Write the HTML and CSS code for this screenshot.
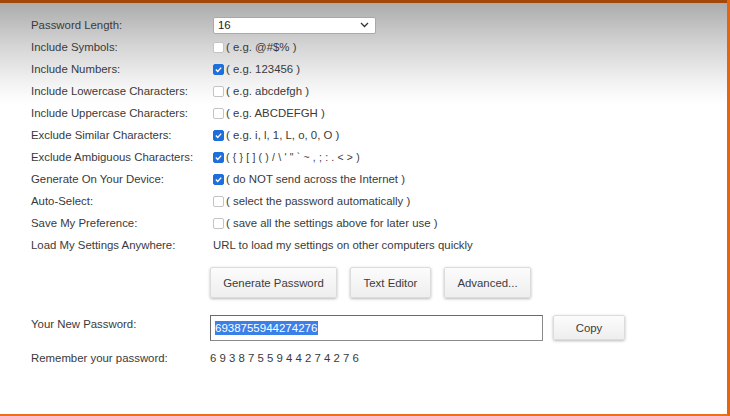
FILE: index.html
```html
<!DOCTYPE html>
<html>
<head>
<meta charset="utf-8">
<link rel="stylesheet" href="styles.css">
</head>
<body>
<div class="frame">
  <div class="topbar"></div>
  <div class="panel">
    <div class="form">
      <div class="label">Password Length:</div>
      <div class="value"><div class="select"><span>16</span><svg width="9" height="6" viewBox="0 0 9 6"><path d="M1 1l3.5 3.5L8 1" fill="none" stroke="#333" stroke-width="1.3"/></svg></div></div>

      <div class="label">Include Symbols:</div>
      <div class="value"><span class="cb"></span>( e.g. @#$% )</div>

      <div class="label">Include Numbers:</div>
      <div class="value"><span class="cb on"><svg viewBox="0 0 11 11"><path d="M2.3 5.6l2.2 2.2 4.3-4.6" fill="none" stroke="#fff" stroke-width="1.7"/></svg></span>( e.g. 123456 )</div>

      <div class="label">Include Lowercase Characters:</div>
      <div class="value"><span class="cb"></span>( e.g. abcdefgh )</div>

      <div class="label">Include Uppercase Characters:</div>
      <div class="value"><span class="cb"></span>( e.g. ABCDEFGH )</div>

      <div class="label">Exclude Similar Characters:</div>
      <div class="value"><span class="cb on"><svg viewBox="0 0 11 11"><path d="M2.3 5.6l2.2 2.2 4.3-4.6" fill="none" stroke="#fff" stroke-width="1.7"/></svg></span>( e.g. i, l, 1, L, o, 0, O )</div>

      <div class="label">Exclude Ambiguous Characters:</div>
      <div class="value"><span class="cb on"><svg viewBox="0 0 11 11"><path d="M2.3 5.6l2.2 2.2 4.3-4.6" fill="none" stroke="#fff" stroke-width="1.7"/></svg></span><span class="amb">( { } [ ] ( ) / \ ' " ` ~ , ; : . &lt; &gt; )</span></div>

      <div class="label">Generate On Your Device:</div>
      <div class="value"><span class="cb on"><svg viewBox="0 0 11 11"><path d="M2.3 5.6l2.2 2.2 4.3-4.6" fill="none" stroke="#fff" stroke-width="1.7"/></svg></span>( do NOT send across the Internet )</div>

      <div class="label">Auto-Select:</div>
      <div class="value"><span class="cb"></span>( select the password automatically )</div>

      <div class="label">Save My Preference:</div>
      <div class="value"><span class="cb"></span>( save all the settings above for later use )</div>

      <div class="label">Load My Settings Anywhere:</div>
      <div class="value plain">URL to load my settings on other computers quickly</div>
    </div>

    <div class="buttons">
      <button class="btn gen">Generate Password</button>
      <button class="btn te">Text Editor</button>
      <button class="btn adv">Advanced...</button>
    </div>

    <div class="result">
      <div class="label rlabel">Your New Password:</div>
      <div class="pwbox"><span class="sel">6938755944274276</span></div>
      <button class="btn copy">Copy</button>
    </div>

    <div class="remember">
      <div class="label">Remember your password:</div>
      <div class="digits">6 9 3 8 7 5 5 9 4 4 2 7 4 2 7 6</div>
    </div>
  </div>
</div>
</body>
</html>
```

FILE: styles.css
```css
html, body {
  margin: 0;
  padding: 0;
  width: 730px;
  height: 416px;
  overflow: hidden;
  background: #fff;
  font-family: "Liberation Sans", Arial, sans-serif;
  font-size: 11.4px;
  color: #333;
}

.frame {
  width: 727px;
  height: 414px;
  border-right: 3px solid #e2650f;
  border-bottom: 2px solid #e8701e;
  display: flex;
  flex-direction: column;
  background: linear-gradient(#a9a9a9 0px, #d4d4d4 45px, #f4f4f4 85px, #fff 105px);
}

.topbar {
  height: 3px;
  background: #a2480a;
  flex: none;
}

.panel {
  padding-left: 31px;
  padding-top: 11px;
}

.form {
  display: grid;
  grid-template-columns: 179px 1fr;
  grid-auto-rows: 22px;
  align-items: center;
}

.label {
  color: #3a3a3a;
  white-space: nowrap;
}

.value {
  display: flex;
  align-items: center;
  padding-left: 3px;
  color: #3a3a3a;
  white-space: nowrap;
}

.select {
  width: 151px;
  height: 15px;
  border: 1px solid #a9a9a9;
  border-radius: 2px;
  background: #fff;
  display: flex;
  align-items: center;
  justify-content: space-between;
  padding: 0 6px 0 4px;
  box-sizing: content-box;
  color: #222;
}

.cb {
  width: 9px;
  height: 9px;
  border: 1px solid #c4c4c4;
  border-radius: 2px;
  background: #fff;
  margin-right: 2px;
  flex: none;
  display: inline-flex;
}

.cb.on {
  background: #1f6fdb;
  border-color: #1f6fdb;
}

.cb svg {
  width: 9px;
  height: 9px;
}

.amb {
  font-size: 10.4px;
  letter-spacing: 0.2px;
}

.buttons {
  display: flex;
  gap: 13px;
  margin-left: 179px;
  margin-top: 11px;
}

.btn {
  height: 31px;
  font-family: "Liberation Sans", Arial, sans-serif;
  font-size: 11.4px;
  color: #3c3c3c;
  background: linear-gradient(#fcfcfc, #eeeeee);
  border: 1px solid #dcdcdc;
  border-radius: 2px;
  box-shadow: 0 1px 3px rgba(0, 0, 0, 0.28);
  padding: 0;
  margin: 0;
}

.gen { width: 127px; }
.te { width: 81px; }
.adv { width: 87px; }

.result {
  display: flex;
  align-items: flex-start;
  margin-top: 17px;
}

.rlabel {
  width: 179px;
  flex: none;
  padding-top: 3px;
}

.pwbox {
  width: 327px;
  height: 24px;
  border: 1px solid #8a8a8a;
  border-top-color: #6a6a6a;
  border-left-color: #6a6a6a;
  background: #fff;
  display: flex;
  align-items: center;
  padding-left: 4px;
  box-sizing: content-box;
}

.sel {
  background: #3b80e8;
  color: #fff;
  font-size: 11.5px;
  line-height: 14px;
  padding-right: 1px;
}

.copy {
  width: 72px;
  height: 25px;
  margin-left: 10px;
}

.remember {
  display: flex;
  margin-top: 11px;
}

.remember .label {
  width: 179px;
  flex: none;
}

.digits {
  color: #3a3a3a;
}
```
